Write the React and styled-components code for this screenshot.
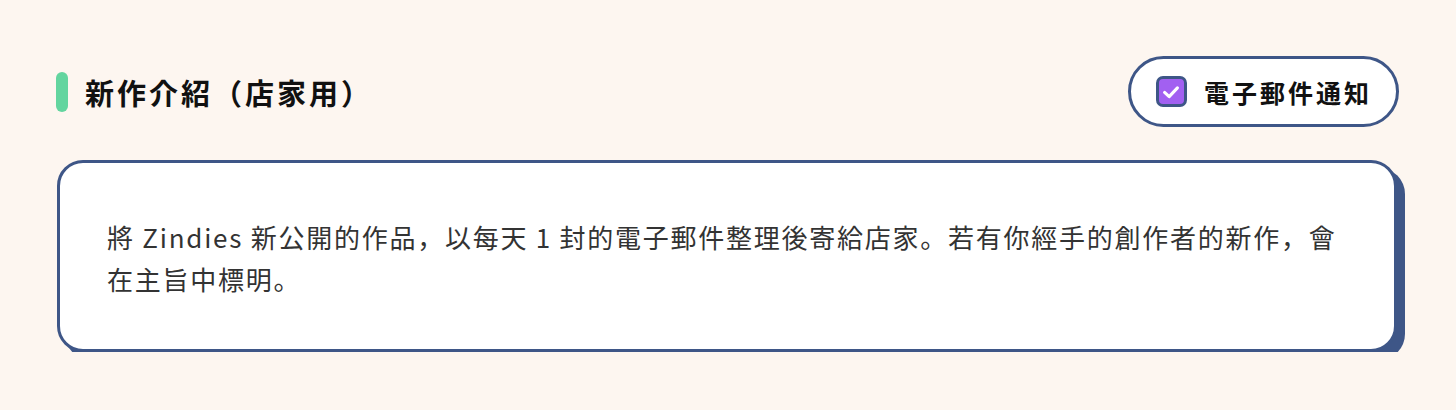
import React, { useState } from 'react';
import styled, { createGlobalStyle } from 'styled-components';

const GlobalStyle = createGlobalStyle`
  body {
    margin: 0;
    background: #fdf6f0;
    font-family: "Noto Sans CJK JP", "Noto Sans CJK TC", "Noto Sans", sans-serif;
  }
`;

export default function App() {
  const [notify, setNotify] = useState(true);

  return (
    <>
      <GlobalStyle />
      <Wrapper>
        <Header>
          <Title>新作介紹（店家用）</Title>
          <NotifyToggle onClick={() => setNotify(!notify)}>
            <Check checked={notify}>
              {notify && (
                <svg width="22" height="22" viewBox="0 0 24 24" fill="none" stroke="#fff" strokeWidth="3.4" strokeLinecap="round" strokeLinejoin="round">
                  <polyline points="5 12.5 10 17 19 7.5" />
                </svg>
              )}
            </Check>
            電子郵件通知
          </NotifyToggle>
        </Header>
        <Card>
          <p>
            將 Zindies 新公開的作品，以每天 1 封的電子郵件整理後寄給店家。若有你經手的創作者的新作，會在主旨中標明。
          </p>
        </Card>
      </Wrapper>
    </>
  );
}

const Wrapper = styled.div`
  padding: 56px 59px 0 57px;
`;

const Header = styled.div`
  display: flex;
  justify-content: space-between;
  align-items: center;
  margin-right: -2px;
  margin-left: -1px;
`;

const Title = styled.h2`
  margin: 0;
  display: flex;
  align-items: center;
  gap: 17px;
  font-size: 29px;
  font-weight: 700;
  color: #111;
  letter-spacing: 3px;

  &::before {
    content: '';
    width: 12px;
    height: 40px;
    border-radius: 6px;
    background: #63d59f;
  }
`;

const NotifyToggle = styled.button`
  display: flex;
  align-items: center;
  gap: 17px;
  height: 71px;
  padding: 0 24px 0 25px;
  border: 3px solid #3e5687;
  border-radius: 40px;
  background: #fff;
  font-family: inherit;
  font-size: 25px;
  font-weight: 700;
  color: #111;
  letter-spacing: 3px;
  cursor: pointer;
`;

const Check = styled.span`
  width: 31px;
  height: 31px;
  box-sizing: border-box;
  border: 3.5px solid #3e5687;
  border-radius: 7px;
  background: ${({ checked }) => (checked ? '#a260f1' : '#fff')};
  display: flex;
  align-items: center;
  justify-content: center;
`;

const Card = styled.div`
  margin-top: 33px;
  background: #fff;
  border: 3px solid #3e5687;
  border-radius: 26px;
  box-shadow: 8px 8px 0 #3e5687;
  padding: 53px 34px 49px 47px;

  p {
    margin: 0;
    font-size: 26px;
    line-height: 42px;
    letter-spacing: 1.75px;
    color: #333;
  }
`;
